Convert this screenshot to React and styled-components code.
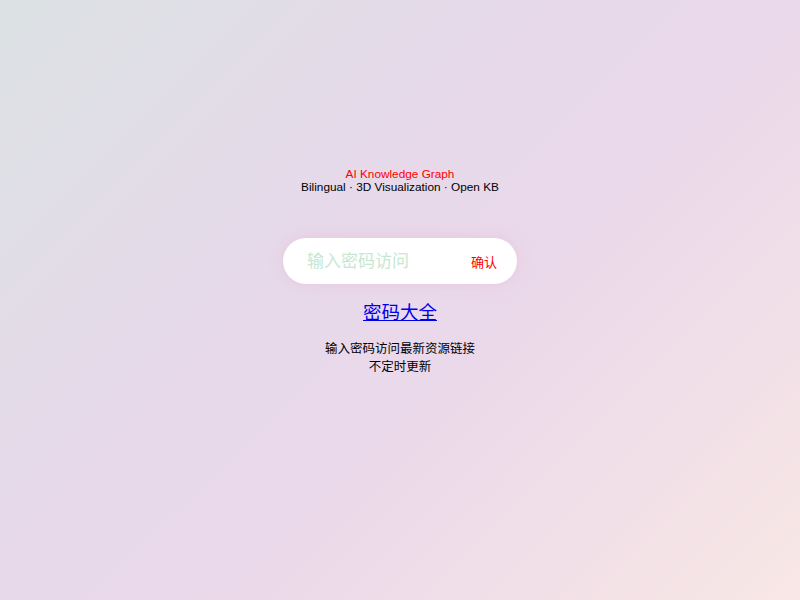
import React from 'react';
import styled, { createGlobalStyle } from 'styled-components';

const GlobalStyle = createGlobalStyle`
    html, body {
        margin: 0;
        padding: 0;
        height: 100%;
    }
    body {
        font-family: "Liberation Sans", "Noto Sans CJK SC", sans-serif;
        background: linear-gradient(135deg, #dce2e4 0%, #e7d9ea 40%, #ebd9ea 60%, #f8e7e5 100%);
        background-attachment: fixed;
        min-height: 100vh;
    }
`

const Page = styled.div`
    min-height: 100vh;
    display: flex;
    flex-direction: column;
    align-items: center;
    padding-top: 168px;
    box-sizing: border-box;
`

const Header = styled.header`
    text-align: center;
    font-size: 11.8px;
    line-height: 13px;
`

const Title = styled.div`
    color: #ff0000;
`

const Subtitle = styled.div`
    color: #000;
`

const SearchBox = styled.form`
    margin-top: 44px;
    width: 234px;
    height: 46px;
    box-sizing: border-box;
    background: #fff;
    border-radius: 23px;
    display: flex;
    align-items: center;
    padding: 0 20px 0 24px;
    box-shadow: 0 0 14px rgba(232, 186, 214, 0.55);
`

const Input = styled.input`
    flex: 1;
    min-width: 0;
    border: none;
    outline: none;
    background: transparent;
    font-family: "Liberation Sans", "Noto Sans CJK SC", sans-serif;
    font-size: 17px;
    padding: 0;
    margin-top: 1px;
    color: #333;

    &::placeholder {
        color: #c6e7d0;
    }
`

const Confirm = styled.button`
    border: none;
    background: transparent;
    padding: 0;
    margin-top: 0;
    color: #ff0000;
    font-family: "Liberation Sans", "Noto Sans CJK SC", sans-serif;
    font-size: 13px;
    cursor: pointer;
`

const Link = styled.a`
    margin-top: 17px;
    font-size: 18.5px;
    line-height: 24px;
    color: #0000ee;
    text-decoration: underline;
`

const Notice = styled.p`
    margin: 15px 0 0;
    text-align: center;
    font-size: 12.5px;
    line-height: 18px;
    color: #000;
`

const App = () => {
    return (
        <>
            <GlobalStyle />
            <Page>
                <Header>
                    <Title>AI Knowledge Graph</Title>
                    <Subtitle>Bilingual · 3D Visualization · Open KB</Subtitle>
                </Header>
                <SearchBox onSubmit={e => e.preventDefault()}>
                    <Input type="password" placeholder="输入密码访问" />
                    <Confirm type="submit">确认</Confirm>
                </SearchBox>
                <Link href="#">密码大全</Link>
                <Notice>
                    输入密码访问最新资源链接<br />
                    不定时更新
                </Notice>
            </Page>
        </>
    )
}

export default App;
